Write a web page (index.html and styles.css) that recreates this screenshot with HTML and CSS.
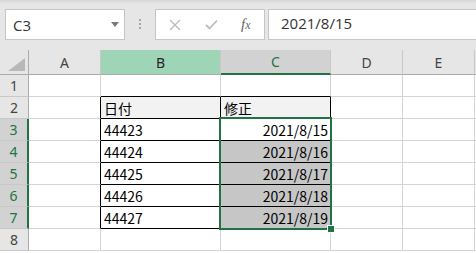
FILE: index.html
```html
<!DOCTYPE html>
<html lang="ja">
<head>
    <meta charset="UTF-8">
    <title>Excel - C3</title>
    <link rel="stylesheet" href="styles.css">
</head>
<body>
    <!-- Formula bar -->
    <div class="toolbar">
        <div class="name-box">
            <span>C3</span>
            <svg class="arrow" width="8" height="5" viewBox="0 0 8 5"><polygon points="0,0 8,0 4,5" fill="#7a7a7a"/></svg>
        </div>
        <div class="grip">
            <svg width="3" height="10" viewBox="0 0 3 10"><rect x="0" y="0" width="2" height="2" fill="#a6a6a6"/><rect x="0" y="4" width="2" height="2" fill="#a6a6a6"/><rect x="0" y="8" width="2" height="2" fill="#a6a6a6"/></svg>
        </div>
        <div class="buttons">
            <svg width="12" height="12" viewBox="0 0 12 12"><path d="M1 1 L11 11 M11 1 L1 11" stroke="#bcbcbc" stroke-width="1.4" fill="none"/></svg>
            <svg width="13" height="11" viewBox="0 0 13 11"><path d="M1 6 L4.5 9.5 L12 1.5" stroke="#bcbcbc" stroke-width="1.8" fill="none"/></svg>
            <span class="fx">f<small>x</small></span>
        </div>
        <div class="formula">2021/8/15</div>
    </div>

    <!-- Worksheet -->
    <div class="sheet">
        <div class="corner"><svg width="17" height="13" viewBox="0 0 17 13"><polygon points="17,0 17,13 0,13" fill="#b8b8b8"/></svg></div>
        <div class="col-head">A</div>
        <div class="col-head hover">B</div>
        <div class="col-head sel">C</div>
        <div class="col-head">D</div>
        <div class="col-head">E</div>
        <div class="col-head last"></div>

        <div class="row-head">1</div>
        <div class="cell"></div>
        <div class="cell edge-b"></div>
        <div class="cell edge-b"></div>
        <div class="cell"></div>
        <div class="cell"></div>
        <div class="cell"></div>

        <div class="row-head">2</div>
        <div class="cell edge-r"></div>
        <div class="cell box title">日付</div>
        <div class="cell box title">修正</div>
        <div class="cell"></div>
        <div class="cell"></div>
        <div class="cell"></div>

        <div class="row-head sel">3</div>
        <div class="cell edge-r"></div>
        <div class="cell box">44423</div>
        <div class="cell box num">2021/8/15</div>
        <div class="cell"></div>
        <div class="cell"></div>
        <div class="cell"></div>

        <div class="row-head sel">4</div>
        <div class="cell edge-r"></div>
        <div class="cell box">44424</div>
        <div class="cell box num picked">2021/8/16</div>
        <div class="cell"></div>
        <div class="cell"></div>
        <div class="cell"></div>

        <div class="row-head sel">5</div>
        <div class="cell edge-r"></div>
        <div class="cell box">44425</div>
        <div class="cell box num picked">2021/8/17</div>
        <div class="cell"></div>
        <div class="cell"></div>
        <div class="cell"></div>

        <div class="row-head sel">6</div>
        <div class="cell edge-r"></div>
        <div class="cell box">44426</div>
        <div class="cell box num picked">2021/8/18</div>
        <div class="cell"></div>
        <div class="cell"></div>
        <div class="cell"></div>

        <div class="row-head sel">7</div>
        <div class="cell edge-r"></div>
        <div class="cell box">44427</div>
        <div class="cell box num picked">2021/8/19</div>
        <div class="cell"></div>
        <div class="cell"></div>
        <div class="cell"></div>

        <div class="row-head">8</div>
        <div class="cell"></div>
        <div class="cell"></div>
        <div class="cell"></div>
        <div class="cell"></div>
        <div class="cell"></div>
        <div class="cell"></div>

        <!-- selection C3:C7 -->
        <div class="selection"><span class="handle"></span></div>
    </div>
</body>
</html>
```

FILE: styles.css
```css
body {
    margin: 0;
    background-color: #ffffff;
    font-family: "Noto Sans CJK JP", sans-serif;
    overflow: hidden;
}
.toolbar {
    display: flex;
    align-items: flex-start;
    height: 50px;
    padding: 9px 0 0 5px;
    box-sizing: border-box;
    background: linear-gradient(#d8d8d8, #e6e6e6 4px);
}
.name-box {
    display: flex;
    align-items: center;
    justify-content: space-between;
    width: 120px;
    height: 31px;
    box-sizing: border-box;
    padding: 0 5px 0 7px;
    background-color: #fff;
    border: 1px solid #c6c6c6;
    font-family: "Open Sans", sans-serif;
    font-size: 15px;
    color: #333;
}
.grip {
    display: flex;
    justify-content: center;
    width: 30px;
    padding-top: 10px;
}
.buttons {
    display: flex;
    align-items: center;
    width: 110px;
    height: 31px;
    box-sizing: border-box;
    padding-left: 13px;
    gap: 24px;
    background-color: #fff;
    border: 1px solid #c6c6c6;
}
.fx {
    font-family: "Liberation Serif", serif;
    font-style: italic;
    font-size: 15px;
    color: #666;
    margin-left: -1px;
}
.fx small {
    font-size: 12px;
}
.formula {
    flex: 1;
    height: 31px;
    margin-left: 3px;
    box-sizing: border-box;
    padding: 3px 0 0 12px;
    background-color: #fff;
    border: 1px solid #c6c6c6;
    border-right: none;
    font-family: "Open Sans", sans-serif;
    font-size: 15px;
    color: #333;
}
.sheet {
    position: relative;
    display: grid;
    grid-template-columns: 29px 72px 120px 110px 72px 72px 1fr;
    grid-template-rows: 25px repeat(8, 22px);
    font-size: 14px;
}
.sheet > div {
    box-sizing: border-box;
}
.corner {
    display: flex;
    align-items: flex-end;
    justify-content: flex-end;
    padding: 0 3px 3px 0;
    background-color: #e6e6e6;
    border-right: 1px solid #ababab;
    border-bottom: 1px solid #ababab;
}
.col-head {
    display: flex;
    align-items: center;
    justify-content: center;
    background-color: #e6e6e6;
    border-right: 1px solid #c8c8c8;
    border-bottom: 1px solid #ababab;
    font-family: "Noto Sans", sans-serif;
    color: #444;
}
.col-head.hover {
    background-color: #9fd5b7;
    color: #262626;
}
.col-head.sel {
    background-color: #d2d2d2;
    color: #217346;
    border-bottom: 2px solid #217346;
}
.col-head.last {
    border-right: none;
}
.row-head {
    display: flex;
    align-items: center;
    justify-content: center;
    background-color: #e6e6e6;
    border-right: 1px solid #ababab;
    border-bottom: 1px solid #c8c8c8;
    font-family: "Noto Sans", sans-serif;
    color: #444;
}
.row-head.sel {
    background-color: #d2d2d2;
    color: #217346;
    border-right: 2px solid #217346;
}
.cell {
    display: flex;
    align-items: center;
    padding: 1px 3px 0;
    border-right: 1px solid #d4d4d4;
    border-bottom: 1px solid #d4d4d4;
    color: #000;
    white-space: nowrap;
}
.cell.edge-b {
    border-bottom-color: #000;
}
.cell.edge-r {
    border-right-color: #000;
}
.cell.box {
    border-right-color: #000;
    border-bottom-color: #000;
}
.cell.title {
    background-color: #f2f2f2;
}
.cell.num {
    justify-content: flex-end;
    padding-right: 2px;
}
.cell.picked {
    background-color: #c6c6c6;
}
.selection {
    position: absolute;
    grid-column: 4 / 5;
    grid-row: 4 / 9;
    top: -2px;
    left: -2px;
    right: -1px;
    bottom: -1px;
    border: 2px solid #217346;
    pointer-events: none;
}
.handle {
    position: absolute;
    right: -5px;
    bottom: -5px;
    width: 6px;
    height: 6px;
    background-color: #217346;
    border: 1px solid #fff;
}
```
